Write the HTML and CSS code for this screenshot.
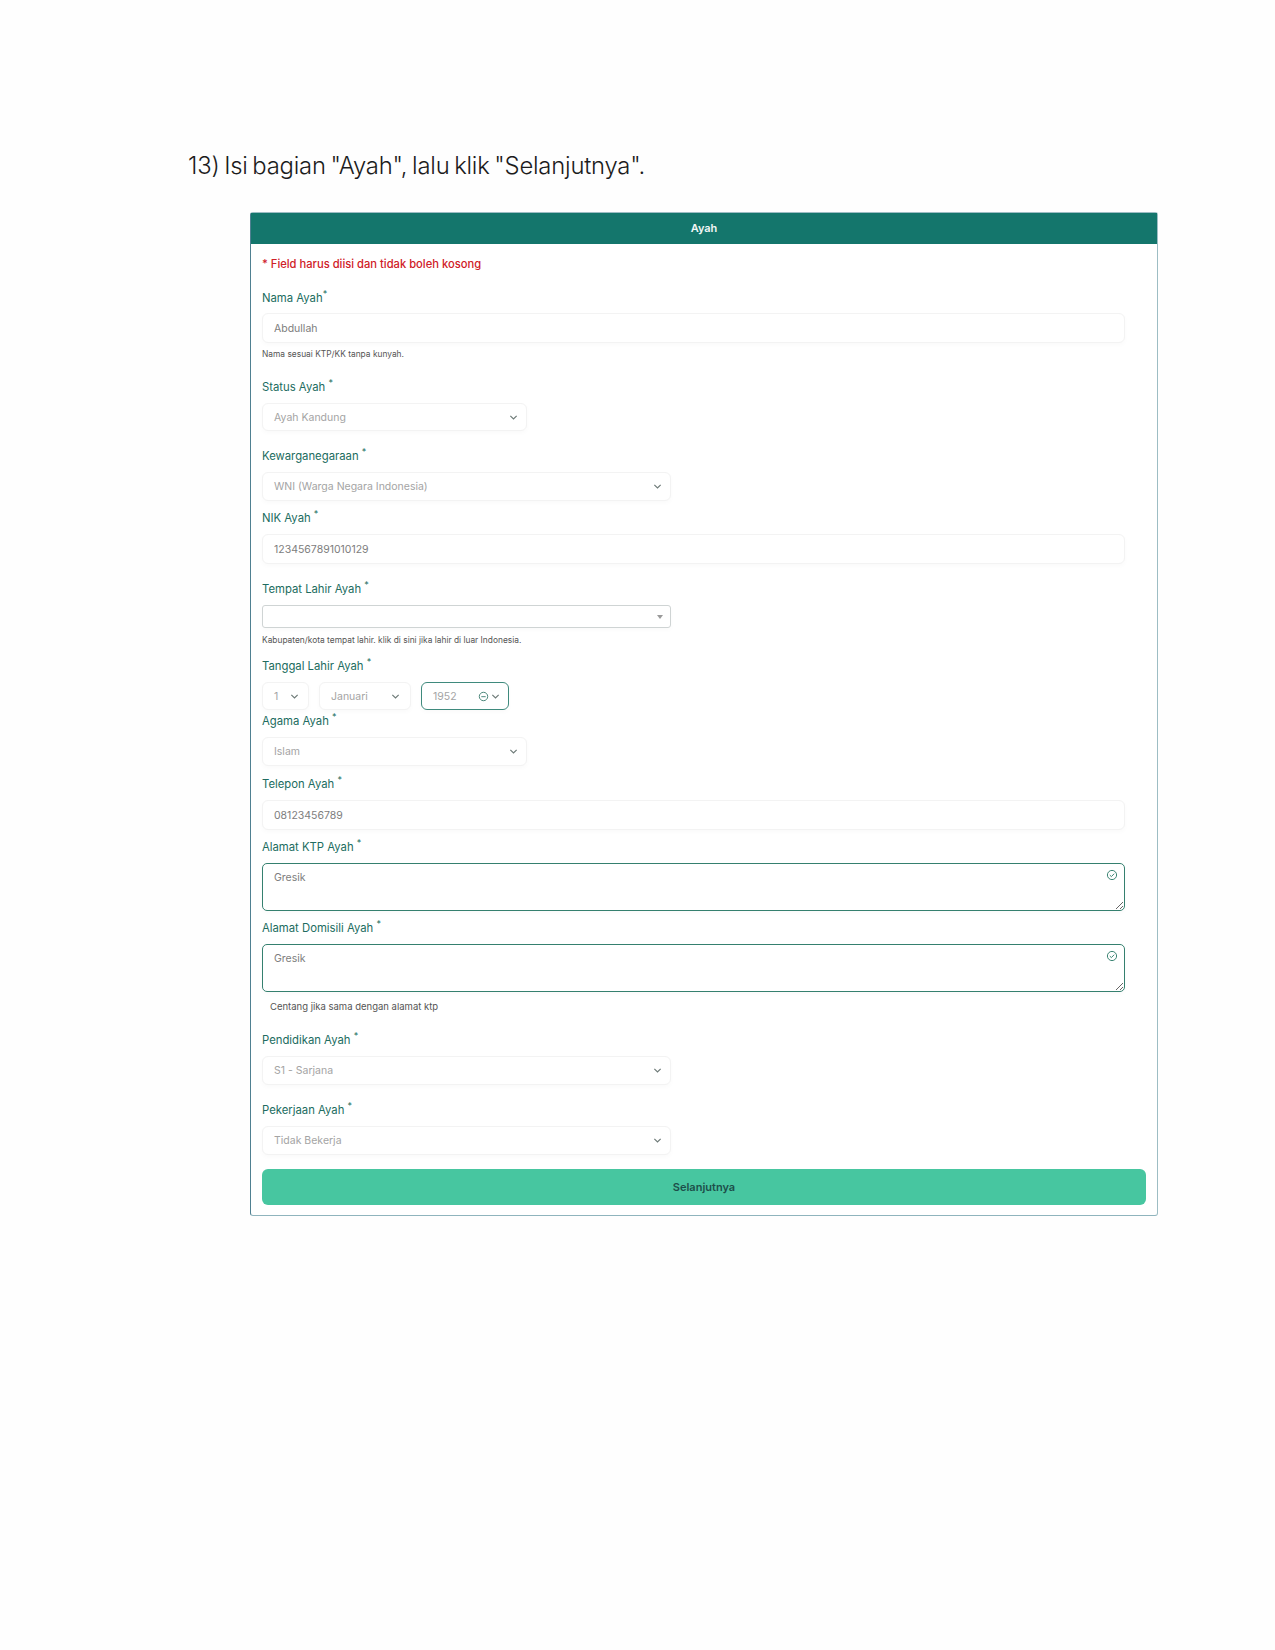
FILE: index.html
```html
<!DOCTYPE html>
<html lang="id">
<head>
    <meta charset="UTF-8">
    <meta name="viewport" content="width=device-width, initial-scale=1.0">
    <title>Isi bagian Ayah</title>
    <link rel="stylesheet" href="styles.css">
</head>
<body>
    <svg class="icon-defs" width="0" height="0">
        <symbol id="chevron" viewBox="0 0 10 10"><path d="M1.5 3.2 5 6.7l3.5-3.5" fill="none" stroke="currentColor" stroke-width="1.3"/></symbol>
        <symbol id="valid" viewBox="0 0 12 12"><circle cx="6" cy="6" r="4.6" fill="none" stroke="currentColor" stroke-width="1"/><path d="M3.8 6.1 5.4 7.6 8.2 4.7" fill="none" stroke="currentColor" stroke-width="1"/></symbol>
        <symbol id="valid-small" viewBox="0 0 12 12"><circle cx="6" cy="6" r="4.6" fill="none" stroke="currentColor" stroke-width="1"/><path d="M3.6 6.2H8.4" fill="none" stroke="currentColor" stroke-width="1"/></symbol>
    </svg>

    <h2 class="step">13) Isi bagian "Ayah", lalu klik "Selanjutnya".</h2>

    <div class="card">
        <div class="card-header">Ayah</div>
        <div class="card-body">
            <p class="required-note">* Field harus diisi dan tidak boleh kosong</p>

            <div class="field gap-16">
                <label class="first-label">Nama Ayah<sup>*</sup></label>
                <input class="control" type="text" value="Abdullah">
                <div class="help help-tight">Nama sesuai KTP/KK tanpa kunyah.</div>
            </div>

            <div class="field gap-15">
                <label>Status Ayah <sup>*</sup></label>
                <div class="control select size-m">Ayah Kandung<svg class="chevron"><use href="#chevron"/></svg></div>
            </div>

            <div class="field gap-7">
                <label>Kewarganegaraan <sup>*</sup></label>
                <div class="control select size-l tall">WNI (Warga Negara Indonesia)<svg class="chevron"><use href="#chevron"/></svg></div>
            </div>

            <div class="field gap-15">
                <label>NIK Ayah <sup>*</sup></label>
                <input class="control" type="text" value="1234567891010129">
            </div>

            <div class="field gap-9">
                <label>Tempat Lahir Ayah <sup>*</sup></label>
                <div class="control combo size-l"><span class="combo-arrow"></span></div>
                <div class="help">Kabupaten/kota tempat lahir. klik di sini jika lahir di luar Indonesia.</div>
            </div>

            <div class="field gap-1">
                <label>Tanggal Lahir Ayah <sup>*</sup></label>
                <div class="date-row">
                    <div class="control select date-day">1<svg class="chevron"><use href="#chevron"/></svg></div>
                    <div class="control select date-month">Januari<svg class="chevron"><use href="#chevron"/></svg></div>
                    <div class="control select date-year">1952<svg class="date-check"><use href="#valid-small"/></svg><svg class="chevron"><use href="#chevron"/></svg></div>
                </div>
            </div>

            <div class="field gap-8">
                <label>Agama Ayah <sup>*</sup></label>
                <div class="control select size-m tall">Islam<svg class="chevron"><use href="#chevron"/></svg></div>
            </div>

            <div class="field gap-7">
                <label>Telepon Ayah <sup>*</sup></label>
                <input class="control" type="text" value="08123456789">
            </div>

            <div class="field gap-7">
                <label>Alamat KTP Ayah <sup>*</sup></label>
                <div class="area-wrap">
                    <textarea class="control area">Gresik</textarea>
                    <svg class="area-check"><use href="#valid"/></svg>
                </div>
            </div>

            <div class="field gap-15">
                <label>Alamat Domisili Ayah <sup>*</sup></label>
                <div class="area-wrap">
                    <textarea class="control area">Gresik</textarea>
                    <svg class="area-check"><use href="#valid"/></svg>
                </div>
                <div class="same-address">Centang jika sama dengan alamat ktp</div>
            </div>

            <div class="field gap-15">
                <label>Pendidikan Ayah <sup>*</sup></label>
                <div class="control select size-l tall">S1 - Sarjana<svg class="chevron"><use href="#chevron"/></svg></div>
            </div>

            <div class="field gap-14">
                <label>Pekerjaan Ayah <sup>*</sup></label>
                <div class="control select size-l tall">Tidak Bekerja<svg class="chevron"><use href="#chevron"/></svg></div>
            </div>

            <button class="next-btn" type="button">Selanjutnya</button>
        </div>
    </div>
</body>
</html>
```

FILE: styles.css
```css
* {
    box-sizing: border-box;
}
body {
    margin: 0;
    min-height: 1650px;
    padding: 151px 0 0 188px;
    background: #fefefe;
    font-family: Inter, "Liberation Sans", sans-serif;
}
.icon-defs {
    display: block;
}
.step {
    margin: 0 0 31px;
    height: 30px;
    font-size: 23.8px;
    line-height: 30px;
    font-weight: 300;
    letter-spacing: -0.2px;
    word-spacing: -1.8px;
    color: #1c1c1c;
}
.card {
    width: 908px;
    height: 1004px;
    margin-left: 62px;
    border: 1px solid #9dbdc4;
    border-left-color: #4f8091;
    border-bottom-color: #8fb4bd;
    border-radius: 3px;
    background: #fff;
}
.card-header {
    height: 31px;
    background: #14766c;
    color: #f2f7f6;
    font-size: 11px;
    font-weight: 600;
    line-height: 30px;
    text-align: center;
}
.card-body {
    padding: 12px 11px 11px;
}
.required-note {
    margin: 0 0 13px;
    height: 18px;
    font-size: 11.2px;
    line-height: 16px;
    font-weight: 500;
    color: #cf2027;
}
label {
    display: block;
    height: 18px;
    margin-bottom: 8px;
    font-size: 11.3px;
    line-height: 20px;
    color: #216c60;
}
.first-label {
    line-height: 23px;
}
sup {
    font-size: 9px;
    line-height: 0;
}
.control {
    display: block;
    width: 863px;
    height: 30px;
    padding: 0 10px 0 11px;
    border: 1px solid #f3f3f3;
    border-radius: 6px;
    background: #fff;
    box-shadow: 0 2px 5px rgba(0,0,0,0.025);
    font-family: inherit;
    font-size: 10.5px;
    color: #7d7d7d;
    outline: none;
}
.select {
    display: flex;
    align-items: center;
    justify-content: space-between;
    height: 28px;
    padding-right: 8px;
    color: #a4a4a4;
}
.tall {
    height: 29px;
}
.size-m {
    width: 265px;
}
.size-l {
    width: 409px;
}
.chevron {
    width: 9px;
    height: 9px;
    color: #6e7b78;
    flex-shrink: 0;
}
.combo {
    position: relative;
    height: 23px;
    border-color: #cfd4d4;
    border-radius: 3px;
}
.combo-arrow {
    position: absolute;
    top: 9px;
    right: 7px;
    border: 3px solid transparent;
    border-top: 4px solid #9a9a9a;
}
.help {
    height: 14px;
    margin-top: 5px;
    font-size: 8.4px;
    line-height: 14px;
    color: #555;
}
.help-tight {
    margin-top: 4px;
}
.date-row {
    display: flex;
    gap: 10px;
}
.date-row .control {
    height: 28px;
    width: auto;
}
.date-row .date-day {
    width: 47px;
    padding-right: 9px;
}
.date-row .date-month {
    width: 92px;
    padding-right: 10px;
}
.date-row .date-year {
    width: 88px;
    border-color: #3f8a7d;
}
.date-check {
    width: 11px;
    height: 11px;
    margin-left: auto;
    margin-right: 2px;
    color: #3d7d70;
}
.area-wrap {
    position: relative;
    width: 863px;
}
.area {
    height: 48px;
    padding-top: 7px;
    border-color: #35806f;
    border-radius: 5px;
    line-height: 14px;
    resize: vertical;
}
.area-check {
    position: absolute;
    top: 6px;
    right: 7px;
    width: 12px;
    height: 12px;
    color: #3d8574;
}
.same-address {
    height: 15px;
    margin: 8px 0 0 8px;
    font-size: 9.5px;
    line-height: 14px;
    color: #555;
}
.gap-1 { margin-bottom: 1px; }
.gap-7 { margin-bottom: 7px; }
.gap-8 { margin-bottom: 8px; }
.gap-9 { margin-bottom: 9px; }
.gap-14 { margin-bottom: 14px; }
.gap-15 { margin-bottom: 15px; }
.gap-16 { margin-bottom: 16px; }
.next-btn {
    display: block;
    width: 884px;
    height: 36px;
    border: none;
    border-radius: 6px;
    background: #47c6a0;
    color: #1d4f4a;
    font-family: inherit;
    font-size: 11px;
    font-weight: 600;
}
```
